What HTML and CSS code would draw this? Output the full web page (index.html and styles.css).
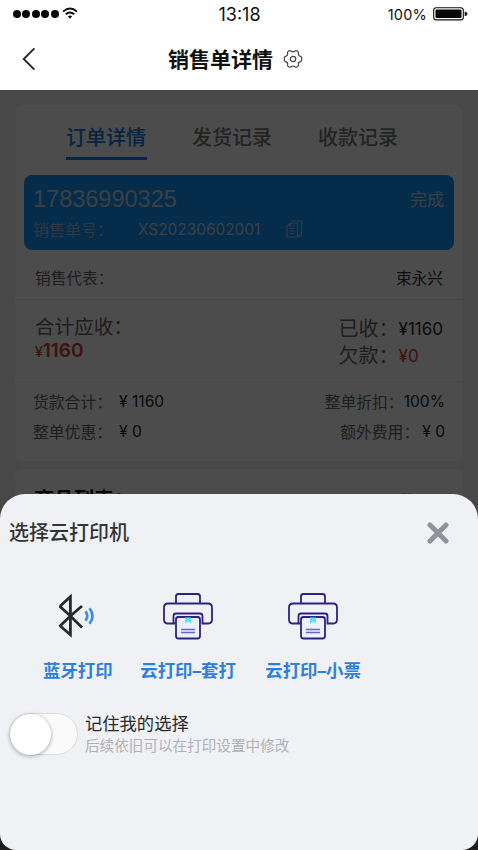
FILE: index.html
```html
<!DOCTYPE html>
<html lang="zh-CN">
<head>
<meta charset="utf-8">
<meta name="viewport" content="width=device-width, initial-scale=1">
<title>销售单详情</title>
<link rel="stylesheet" href="styles.css">
</head>
<body>
<div class="phone">
  <header class="status">
    <div class="signal">
      <i></i><i></i><i></i><i></i><i></i>
      <svg class="wifi" width="16" height="13" viewBox="0 0 16 13" fill="none" stroke="#111" stroke-width="1.8"><path d="M1 4.6Q8-1.6 15 4.6M3.7 7.3Q8 3.6 12.3 7.3"/><path d="M5.8 9.3Q8 7.6 10.2 9.3L8 11.8Z" fill="#111" stroke="none"/></svg>
    </div>
    <span class="time">13:18</span>
    <div class="power"><span>100%</span>
      <svg width="36" height="14" viewBox="0 0 36 14"><rect x=".7" y=".7" width="29.6" height="12.2" rx="2.5" fill="none" stroke="#111" stroke-width="1.1"/><rect x="2.5" y="2.5" width="26" height="8.600" rx="1" fill="#080808"/><path d="M31.7 4.4Q34.5 5 34.5 6.8T31.7 9.2Z" fill="#111"/></svg>
    </div>
  </header>
  <nav class="nav">
    <svg class="back" width="14" height="24" viewBox="0 0 14 24" fill="none" stroke="#222" stroke-width="1.8"><path d="M12.4 1.3 1.7 12l10.7 10.7"/></svg>
    <h1>销售单详情</h1>
    <svg class="gear" width="20" height="20" viewBox="0 0 20 20" fill="none" stroke="#444" stroke-width="1.2" stroke-linejoin="round"><path d="M6.2 1.8Q7.2 1.2 8 2Q10 3.6 12 2Q12.8 1.2 13.8 1.8L15 2.6Q15.7 3.2 15.4 4.2Q15 6.8 17.4 7.3Q18.6 7.6 18.7 8.6V11.2Q18.6 12.3 17.4 12.6Q15 13.2 15.4 15.7Q15.7 16.8 15 17.3L13.8 18Q12.8 18.6 12 17.8Q10 16.2 8 17.8Q7.2 18.6 6.2 18L5 17.3Q4.3 16.8 4.6 15.7Q5 13.2 2.6 12.6Q1.4 12.3 1.3 11.2V8.6Q1.4 7.6 2.6 7.3Q5 6.8 4.6 4.2Q4.3 3.2 5 2.6Z"/><circle cx="10" cy="10" r="2.7"/></svg>
  </nav>
  <main class="page">
    <section class="card order">
      <div class="tabs"><span class="tab active">订单详情</span><span class="tab">发货记录</span><span class="tab">收款记录</span></div>
      <div class="banner">
        <div class="banner-top"><span class="phone-no">17836990325</span><span class="state">完成</span></div>
        <div class="banner-bottom"><span class="no-label">销售单号：</span><span class="no">XS20230602001</span>
          <svg width="17" height="18" viewBox="0 0 17 18" fill="none" stroke="#9ccbf1" stroke-width="1.2"><path d="M4.500 3H11.500V17H1V6Z"/><path d="M4.500 3V6H1M5.500 1H15.500V14.500L11.500 17M3.500 8.500h5M3.500 11h5M3.500 13.500h5M6.500 6H9"/></svg>
        </div>
      </div>
      <div class="row rep"><span>销售代表：</span><span class="dark">束永兴</span></div>
      <div class="totals">
        <div><div class="due-label">合计应收：</div><div class="due"><small>¥</small>1160</div></div>
        <div class="paid">
          <div><span>已收：</span><b>¥1160</b></div>
          <div><span>欠款：</span><b class="red">¥0</b></div>
        </div>
      </div>
      <div class="fees">
        <div class="row"><div><span class="fee-label">货款合计：</span><b>¥ 1160</b></div><div><span>整单折扣：</span><b>100%</b></div></div>
        <div class="row"><div><span class="fee-label">整单优惠：</span><b>¥ 0</b></div><div><span class="extra">额外费用：</span><b>¥ 0</b></div></div>
      </div>
    </section>
    <section class="card goods"><h2>商品列表：</h2><span>数量</span></section>
  </main>
  <div class="mask"></div>
  <section class="sheet">
    <div class="sheet-head"><h2>选择云打印机</h2>
      <svg width="22" height="22" viewBox="0 0 22 22" stroke="#929398" stroke-width="5" stroke-linecap="round"><path d="M3 3 19 19M19 3 3 19"/></svg>
    </div>
    <div class="choices">
      <div class="choice bt">
        <svg width="50" height="50" viewBox="0 0 50 50" fill="none"><path d="M8.5 15 19.4 25 31 36.5M8.5 35.5 19.4 25 31 15M9 15.2 19.4 5.7V43.8L9 34.8" stroke="#292a2b" stroke-width="2.8"/><path d="M34.5 20.3Q38 25 34.5 29.7M38.5 17.2Q44.5 25 38.5 32.8" stroke="#3b8ee4" stroke-width="2.7"/></svg>
        <span>蓝牙打印</span>
      </div>
      <div class="choice">
        <svg width="52" height="50" viewBox="0 0 52 50" fill="none" stroke="#2d2280" stroke-width="1.8"><path d="M14 12V5.500Q14 3 16.500 3H35.500Q38 3 38 5.500V12M13.500 32.500H6Q2 32.500 2 28.500V16.500Q2 12.500 6 12.500H46Q50 12.500 50 16.500V28.500Q50 32.500 46 32.500H40.500V25Q40.500 22.500 38 22.500H14Q11.500 22.500 11.500 25V32.500"/><rect x="14" y="26" width="24" height="21.500" rx="2.5" fill="#edf1ff"/><path d="M23 26.500h6v6l-3-2-3 2Z" fill="#55e7ed" stroke="none"/><path d="M19 38.500h14M19 41.500h14" stroke="#6864c8" stroke-width="1.400"/></svg>
        <span>云打印–套打</span>
      </div>
      <div class="choice">
        <svg width="52" height="50" viewBox="0 0 52 50" fill="none" stroke="#2d2280" stroke-width="1.8"><path d="M14 12V5.500Q14 3 16.500 3H35.500Q38 3 38 5.500V12M13.500 32.500H6Q2 32.500 2 28.500V16.500Q2 12.500 6 12.500H46Q50 12.500 50 16.500V28.500Q50 32.500 46 32.500H40.500V25Q40.500 22.500 38 22.500H14Q11.500 22.500 11.500 25V32.500"/><rect x="14" y="26" width="24" height="21.500" rx="2.5" fill="#edf1ff"/><path d="M23 26.500h6v6l-3-2-3 2Z" fill="#55e7ed" stroke="none"/><path d="M19 38.500h14M19 41.500h14" stroke="#6864c8" stroke-width="1.400"/></svg>
        <span>云打印–小票</span>
      </div>
    </div>
    <div class="remember"><div class="switch"><i></i></div><div><p>记住我的选择</p><small>后续依旧可以在打印设置中修改</small></div></div>
  </section>
</div>
</body>
</html>
```
FILE: styles.css
```css
* { box-sizing: border-box; margin: 0; padding: 0; }
body { width: 478px; height: 850px; overflow: hidden; font-family: Inter, "Noto Sans CJK SC", sans-serif; color: #222; }
svg { display: block; flex: none; }
span, b, h1, h2, p, small { white-space: nowrap; }
.phone { position: relative; height: 850px; overflow: hidden; background: #666; }
.status { display: grid; grid-template-columns: 1fr auto 1fr; align-items: center; height: 28px; padding: 0 9px 0 13px; background: #fff; color: #111; }
.signal { display: flex; align-items: center; gap: 1.4px; padding-bottom: 1px; }
.signal i { width: 8px; height: 8px; border-radius: 50%; background: #080808; }
.wifi { margin-left: 2px; }
.time { margin-left: -3px; font-size: 18px; }
.power { display: flex; align-items: center; justify-content: flex-end; gap: 6px; font-size: 14.5px; letter-spacing: .2px; }
.power svg { margin-bottom: 1px; }
.nav { display: flex; align-items: center; height: 62px; padding-left: 22px; background: #fff; }
.nav h1 { margin-left: 132px; padding-top: 1px; font-size: 21px; line-height: 30px; font-weight: 700; color: #111; }
.gear { margin-left: 10px; }
.page { height: 730px; padding: 15px 15px 0; background: #f0f0f4; overflow: hidden; }
.mask { position: absolute; inset: 90px 0 0; background: rgba(0, 0, 0, .7); }
.card { background: #fff; border-radius: 8px; }
.order { height: 356px; }
.tabs { display: flex; gap: 46px; height: 70px; padding: 16px 0 0 51px; }
.tab { height: 39px; font-size: 20px; line-height: 34px; color: #777; font-weight: 500; }
.tab.active { width: 81px; color: #1477dc; border-bottom: 3px solid #1581e6; }
.tab + .tab { margin-left: -1px; }
.tab:last-child { margin-left: 0; }
.banner { height: 75px; margin: 0 9px; padding: 8px 10px 0 9px; border-radius: 8px; background: #1195f8; color: #c9d5df; }
.banner-top { display: flex; justify-content: space-between; height: 32px; line-height: 33px; }
.phone-no { font-family: "Liberation Sans", sans-serif; font-size: 23.5px; }
.state { font-size: 17px; line-height: 34px; }
.banner-bottom { display: flex; align-items: center; height: 28px; font-size: 16px; }
.no-label { width: 105px; color: #9bbdda; }
.no { width: 148px; font-size: 15.4px; }
.row { display: flex; justify-content: space-between; align-items: center; }
.rep { height: 50px; padding: 6px 20px 0; border-bottom: 1px solid #eee; font-size: 15.7px; color: #656565; }
.rep .dark { color: #333; }
.totals { display: flex; justify-content: space-between; height: 82px; padding: 13px 20px 0 20px; border-bottom: 1px solid #eee; color: #656565; }
.due-label { font-size: 19.6px; line-height: 28px; }
.due { font-size: 19px; line-height: 20px; font-weight: 600; color: #d83b2e; }
.due small { font-size: 14px; font-weight: 500; }
.paid { padding-top: 2px; }
.paid > div { display: flex; line-height: 28px; font-size: 20px; height: 26.500px; }
.paid b { font-size: 17px; font-weight: 400; color: #292929; }
.paid .red { color: #d83b2e; }
.fees { padding: 5px 18px 0 18px; font-size: 15.800px; color: #656565; }
.fees .row { height: 29.500px; }
.fees .row > div { display: flex; align-items: center; }
.fees b { font-size: 15.6px; font-weight: 400; color: #202634; }
.fee-label { width: 86px; }
.extra { margin-right: 3px; }
.goods { display: flex; justify-content: space-between; height: 381px; margin-top: 8px; padding: 18px 34px 0 19px; font-size: 15px; color: #555; }
.goods h2 { font-size: 20px; line-height: 26px; color: #111; }
.goods span { line-height: 27px; }
.sheet { position: absolute; left: 0; right: 0; bottom: 0; height: 356px; border-radius: 25px 25px 16px 16px; background: #f0f1f5; }
.sheet-head { display: flex; justify-content: space-between; align-items: center; height: 77px; padding: 0 29px 0 9px; }
.sheet-head h2 { font-size: 20px; line-height: 28px; font-weight: 500; color: #333437; }
.choices { display: flex; padding: 20px 0 0 43px; gap: 28px; }
.choice { display: flex; flex-direction: column; align-items: center; gap: 17px; color: #2c80dc; font-size: 17.400px; font-weight: 700; line-height: 25px; }
.choice + .choice { min-width: 97px; }
.choice:nth-child(2) { margin-left: -1px; }
.bt svg { margin-left: -4px; }
.remember { display: flex; align-items: center; padding: 28px 0 0 9px; }
.switch { width: 69px; height: 42px; margin-right: 7px; border: 1px solid #dedee0; border-radius: 21px; background: #fafafa; }
.switch i { display: block; width: 41px; height: 41px; border-radius: 50%; background: #fff; box-shadow: 0 1px 4px rgba(0, 0, 0, .35); }
.remember p { padding-top: 1px; font-size: 17.3px; line-height: 24px; color: #292a2c; }
.remember small { display: block; font-size: 14.6px; line-height: 20px; color: #b0b1b5; }
```
